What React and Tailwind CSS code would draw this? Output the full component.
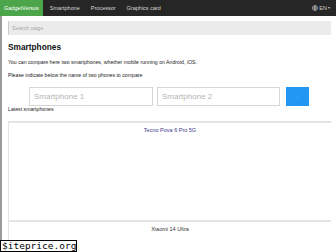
import React from "react";

export default function App() {
  const font = { fontFamily: '"Liberation Sans", Arial, sans-serif' };
  return (
    <div className="relative w-[336px] h-[252px] overflow-hidden bg-white" style={font}>
      {/* nav */}
      <div className="flex items-center h-[16px] bg-[#262626] text-[5.5px] text-[#d8d8d8]">
        <div className="flex items-center h-full px-[4px] bg-[#4ca54a] text-white">GadgetVersus</div>
        <div className="ml-[7px]">Smartphone</div>
        <div className="ml-[11px]">Processor</div>
        <div className="ml-[11px]">Graphics card</div>
        <div className="ml-auto mr-[6px] flex items-center gap-[1px] text-[#cfcfcf]">
          <svg width="6" height="6" viewBox="0 0 12 12" fill="none" stroke="#cfcfcf" strokeWidth="1.2">
            <circle cx="6" cy="6" r="5" />
            <path d="M1 6h10M6 1c2 2 2 8 0 10M6 1c-2 2-2 8 0 10" />
          </svg>
          <span>EN</span>
          <span className="text-[4px]">▾</span>
        </div>
      </div>
      {/* body */}
      <div className="border-l-2 border-[#9a9a9a] h-[236px]">
        <div className="pl-[6px] pr-[5px] pt-[5px]">
          <div className="h-[14px] bg-[#ebebeb] border-l border-[#c9c9c9] flex items-center pl-[3px] text-[5.5px] text-[#a8a8a8]">
            Search page
          </div>
          <div className="mt-[6px] text-[8.3px] font-bold text-[#111]">Smartphones</div>
          <div className="mt-[6px] text-[5.2px] text-[#222]">
            You can compare here two smartphones, whether mobile running on Android, iOS.
          </div>
          <div className="mt-[5px] text-[5.2px] text-[#222]">
            Please indicate below the name of two phones to compare
          </div>
          <div className="mt-[7px] flex items-center pl-[21px]">
            <div className="w-[124px] h-[19px] border border-[#d6d6d6] flex items-center pl-[4px] text-[8px] text-[#b5b5b5]">
              Smartphone 1
            </div>
            <div className="ml-[4px] w-[123px] h-[19px] border border-[#d6d6d6] flex items-center pl-[4px] text-[8px] text-[#b5b5b5]">
              Smartphone 2
            </div>
            <div className="ml-[6px] w-[23px] h-[19px] bg-[#2196f3] flex items-center justify-center text-[5px] text-white">
              .
            </div>
          </div>
          <div className="mt-0 text-[5.2px] text-[#222]">Latest smartphones</div>
          <div className="mt-[7px] w-[323px] border-t-2 border-l border-[#e4e4e4] h-[99px] flex justify-center pt-[3px]">
            <div className="text-[5.5px] text-[#3a3a8c]">Tecno Pova 6 Pro 5G</div>
          </div>
          <div className="w-[323px] border-t-2 border-l border-[#e4e4e4] h-[40px] flex justify-center pt-[3px]">
            <div className="text-[5.5px] text-[#333]">Xiaomi 14 Ultra</div>
          </div>
        </div>
      </div>
      {/* watermark */}
      <div
        className="absolute left-0 bottom-0 h-[12px] w-[77px] bg-white border border-black flex items-center pl-[1px] text-[9.5px] text-black leading-none"
        style={{ fontFamily: '"DejaVu Sans Mono", monospace' }}
      >
        $iteprice.org
      </div>
    </div>
  );
}
